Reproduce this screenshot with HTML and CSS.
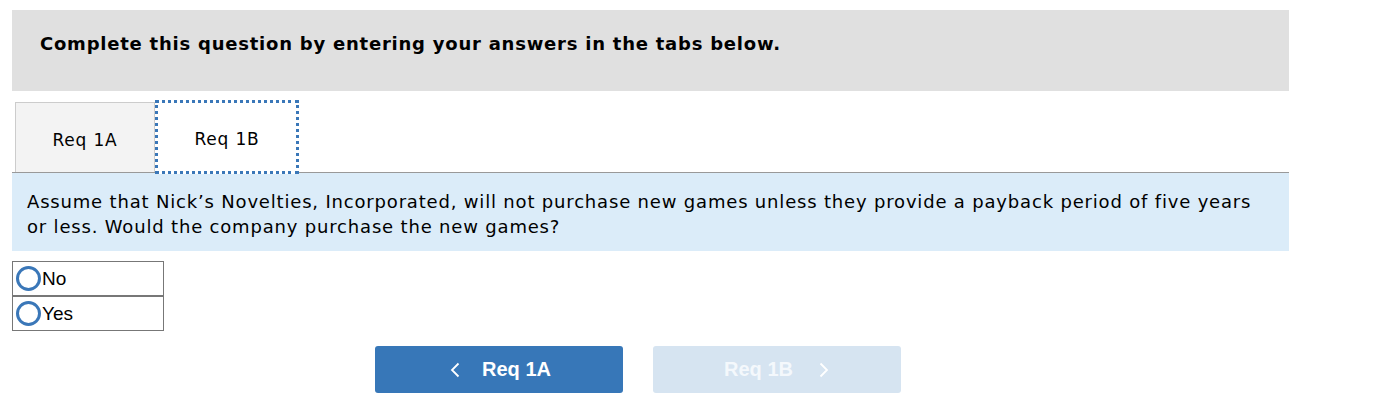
FILE: index.html
```html
<!DOCTYPE html>
<html lang="en">
<head>
  <meta charset="UTF-8" />
  <title>Req 1B</title>
  <link rel="stylesheet" href="styles.css">
</head>
<body>
  <div class="question">
    <div class="instructions">Complete this question by entering your answers in the tabs below.</div>
    <div class="tabs">
      <div class="tab">Req 1A</div>
      <div class="tab active">Req 1B</div>
    </div>
    <div class="prompt">
      Assume that Nick’s Novelties, Incorporated, will not purchase new games unless they provide a payback period of five years or less. Would the company purchase the new games?
    </div>
    <table class="choices">
      <tr><td><span class="radio"></span>No</td></tr>
      <tr><td><span class="radio"></span>Yes</td></tr>
    </table>
    <div class="nav">
      <button class="nav-btn">
        <svg width="10" height="16" viewBox="0 0 10 16"><path d="M8.5 1.5 L2 8 L8.5 14.5" fill="none" stroke="#fff" stroke-width="1.8"/></svg>
        <span>Req 1A</span>
      </button>
      <button class="nav-btn disabled">
        <span>Req 1B</span>
        <svg width="10" height="16" viewBox="0 0 10 16"><path d="M1.5 1.5 L8 8 L1.5 14.5" fill="none" stroke="#fff" stroke-width="1.8"/></svg>
      </button>
    </div>
  </div>
</body>
</html>
```

FILE: styles.css
```css
body {
  margin: 0;
  padding: 10px 12px;
  font-family: "DejaVu Sans", Verdana, sans-serif;
  color: #000;
  background: #fff;
}
.question {
  width: 1277px;
}
.instructions {
  background-color: #e0e0e0;
  height: 81px;
  box-sizing: border-box;
  padding: 23px 28px 0;
  font-size: 18px;
  letter-spacing: 0.77px;
  font-weight: bold;
}
.tabs {
  display: flex;
  align-items: flex-end;
  margin-top: 9px;
  padding-left: 3px;
  border-bottom: 1px solid #999;
}
.tab {
  width: 140px;
  height: 70px;
  box-sizing: border-box;
  display: flex;
  align-items: center;
  justify-content: center;
  padding-top: 4px;
  font-size: 17px;
  letter-spacing: 0.8px;
  background-color: #f3f3f3;
  border: 1px solid #ccc;
  border-bottom: none;
}
.tab.active {
  width: 144px;
  height: 74px;
  background-color: #fff;
  border: 3px dotted #3a77b8;
  margin-bottom: -2px;
}
.prompt {
  background-color: #dbecf9;
  padding: 16px 30px 12px 15px;
  font-size: 18px;
  letter-spacing: 0.82px;
  line-height: 25px;
}
.choices {
  margin-top: 10px;
  width: 152px;
  border-collapse: collapse;
  font-family: "Liberation Sans", Arial, sans-serif;
  font-size: 19px;
}
.choices td {
  border: 1px solid #777;
  height: 35px;
  padding: 0 0 0 3px;
  display: flex;
  align-items: center;
  box-sizing: border-box;
}
.radio {
  width: 19px;
  height: 19px;
  border: 3.5px solid #3a77b8;
  border-radius: 50%;
  margin-right: 1px;
}
.nav {
  display: flex;
  justify-content: center;
  gap: 30px;
  margin-top: 15px;
  padding-right: 26px;
}
.nav-btn {
  width: 248px;
  height: 47px;
  border: none;
  border-radius: 3px;
  background-color: #3777b8;
  color: #fff;
  font-family: "Liberation Sans", Arial, sans-serif;
  font-size: 20px;
  font-weight: bold;
  display: flex;
  align-items: center;
  justify-content: center;
  gap: 22px;
  padding: 0 6px 0 10px;
}
.nav-btn.disabled {
  background-color: #d6e4f1;
  color: #f4f8fc;
  gap: 26px;
  padding: 0 6px;
}
```
